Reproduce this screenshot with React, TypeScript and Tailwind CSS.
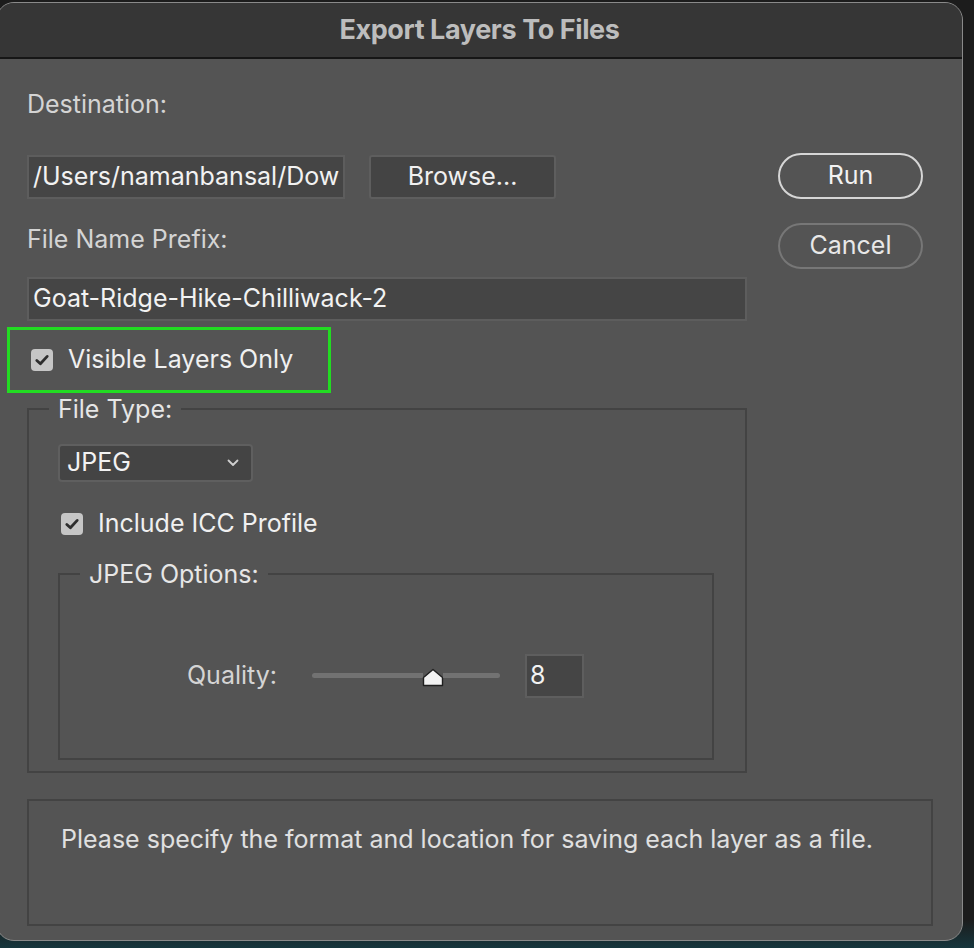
import React from "react";

const font = "font-['Inter','Liberation_Sans',sans-serif]";

function Check() {
  return (
    <span className="flex h-[22px] w-[22px] shrink-0 items-center justify-center rounded-[4px] bg-[#c6c6c6]">
      <svg width="16" height="16" viewBox="0 0 16 16" fill="none">
        <path d="M2.8 8.4 6.4 11.8 13.2 4.4" stroke="#2e2e2e" strokeWidth="2.8" strokeLinecap="round" strokeLinejoin="round" />
      </svg>
    </span>
  );
}

function Slider() {
  return (
    <div className="flex h-[20px] w-[188px] items-center">
      <div className="h-[5px] w-[111px] rounded-l-full bg-[#727272]" />
      <svg width="22" height="19" viewBox="0 0 22 19" className="-mx-[1px] mt-[4px] shrink-0">
        <path d="M1.5 17.5V9.5L11 1.5l9.5 8v8z" fill="#f2f2f2" stroke="#1f1f1f" strokeWidth="1.4" strokeLinejoin="round" />
      </svg>
      <div className="h-[5px] flex-1 rounded-r-full bg-[#727272]" />
    </div>
  );
}

export default function App() {
  return (
    <div className={`h-[948px] w-[974px] overflow-hidden bg-[linear-gradient(to_bottom,#1c1c1c_0%,#1c1c1c_97%,#16363d_100%)] ${font}`}>
      <div className="ml-[-4px] mt-[2px] flex h-[939px] w-[967px] flex-col overflow-hidden rounded-[18px] border border-[#8a8a8a] bg-[#545454]">
        <div className="flex h-[56px] shrink-0 items-center justify-center border-b-2 border-[#161616] bg-[#363636]">
          <h1 className="text-[27px] font-bold tracking-[-0.4px] text-[#bdbdbd]">Export Layers To Files</h1>
        </div>

        <div className="flex flex-1 pl-[30px] text-[25px]">
          <div className="w-[720px]">
            <p className="mt-[30px] h-[30px] leading-[30px] text-[#d4d4d4]">Destination:</p>

            <div className="mt-[36px] flex gap-[24px]">
              <div className="flex h-[44px] w-[318px] items-center overflow-hidden border-2 border-[#5d5d5d] bg-[#454545] pl-[4px] whitespace-nowrap text-[#f2f2f2]">
                /Users/namanbansal/Dow
              </div>
              <button className="h-[44px] w-[187px] rounded-[3px] border-2 border-[#5e5e5e] bg-[#444444] text-[#f0f0f0]">
                Browse...
              </button>
            </div>

            <p className="mt-[25px] h-[30px] leading-[30px] text-[#d4d4d4]">File Name Prefix:</p>

            <div className="mt-[23px] flex h-[44px] w-[720px] items-center border-2 border-[#5d5d5d] bg-[#454545] pl-[4px] text-[#f2f2f2]">
              Goat-Ridge-Hike-Chilliwack-2
            </div>

            <div className="ml-[-20px] mt-[6px] flex h-[66px] w-[324px] items-center gap-[15px] border-[3px] border-[#22dc22] pl-[21px] text-[#f0f0f0]">
              <Check />
              <span>Visible Layers Only</span>
            </div>

            <fieldset className="mt-[1px] h-[379px] w-[720px] border-2 border-[#434343]">
              <legend className="ml-[20px] px-[9px] leading-[30px] text-[#e6e6e6]">File Type:</legend>

              <div className="pl-[29px]">
                <div className="mt-[20px] flex h-[38px] w-[195px] items-center justify-between rounded-[4px] border-2 border-[#5f5f5f] bg-[#444444] pl-[7px] pr-[12px] text-[#f2f2f2]">
                  <span>JPEG</span>
                  <svg width="12" height="8" viewBox="0 0 12 8" fill="none">
                    <path d="M1.5 1.5 6 6l4.5-4.5" stroke="#cfcfcf" strokeWidth="1.8" strokeLinecap="round" strokeLinejoin="round" />
                  </svg>
                </div>

                <div className="ml-[3px] mt-[23px] flex items-center gap-[15px] text-[#f0f0f0]">
                  <Check />
                  <span>Include ICC Profile</span>
                </div>

                <fieldset className="mt-[16px] h-[201px] w-[656px] border-2 border-[#434343]">
                  <legend className="ml-[20px] px-[9px] leading-[30px] text-[#e6e6e6]">JPEG Options:</legend>
                  <div className="mt-[65px] flex items-center">
                    <span className="ml-[127px] w-[125px] text-[#d4d4d4]">Quality:</span>
                    <Slider />
                    <div className="ml-[25px] flex h-[44px] w-[59px] items-center border-2 border-[#5e5e5e] bg-[#454545] pl-[3px] text-[#f2f2f2]">
                      8
                    </div>
                  </div>
                </fieldset>
              </div>
            </fieldset>

            <div className="mt-[26px] h-[127px] w-[906px] border-2 border-[#434343] pl-[32px] pt-[20px] text-[#e0e0e0]">
              Please specify the format and location for saving each layer as a file.
            </div>
          </div>

          <div className="ml-[31px] mt-[94px] flex flex-col gap-[24px]">
            <button className="h-[46px] w-[145px] rounded-full border-2 border-[#d6d6d6] text-[#f2f2f2]">Run</button>
            <button className="h-[46px] w-[145px] rounded-full border-2 border-[#777777] text-[#e8e8e8]">Cancel</button>
          </div>
        </div>
      </div>
    </div>
  );
}
